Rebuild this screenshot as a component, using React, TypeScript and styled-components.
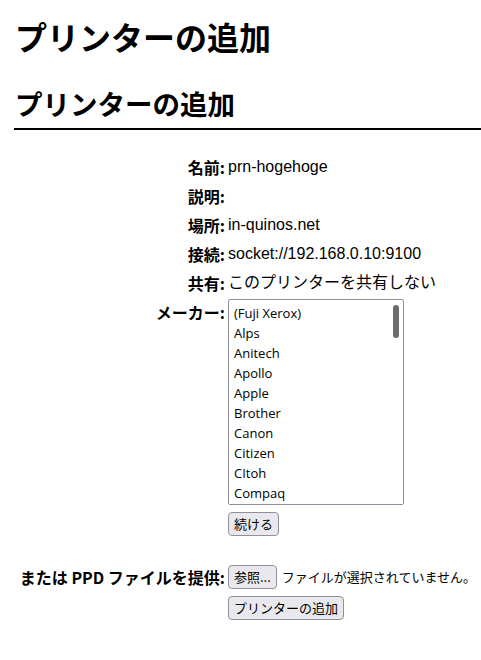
import { Fragment } from 'react'
import styled, { createGlobalStyle } from 'styled-components'

const GlobalStyle = createGlobalStyle`
  html, body {
    margin: 0;
    padding: 0;
    background: #fff;
  }
  body {
    font-family: "Liberation Sans", "Noto Sans CJK JP", sans-serif;
    color: #000;
  }
`

const Page = styled.div`
  padding: 0 0 40px 14px;
`

const Title = styled.h1`
  margin: 0;
  padding: 14px 0 0 1px;
  font-family: "Noto Sans CJK JP", sans-serif;
  font-size: 32px;
  font-weight: 700;
  line-height: 44px;
`

const Heading = styled.h2`
  margin: 26px 0 0;
  padding: 0 0 6px 1px;
  font-family: "Noto Sans CJK JP", sans-serif;
  font-size: 27.5px;
  font-weight: 700;
  line-height: 38px;
  border-bottom: 2px solid #000;
`

const FormGrid = styled.div`
  display: grid;
  grid-template-columns: 211px auto;
  column-gap: 3px;
  margin-top: 22px;
`

const Label = styled.div`
  text-align: right;
  font-family: "Noto Sans CJK JP", sans-serif;
  font-weight: 700;
  font-size: 16px;
  line-height: 27px;
  padding-top: 2px;
  white-space: nowrap;
`

const Value = styled.div`
  font-size: 16px;
  line-height: 29px;
  white-space: nowrap;
`

const Cell = styled.div<{ $pt?: number; $pb?: number }>`
  padding-top: ${p => p.$pt ?? 0}px;
  padding-bottom: ${p => p.$pb ?? 0}px;
  display: flex;
  align-items: center;
  gap: 5px;
`

const ListBox = styled.div`
  position: relative;
  box-sizing: border-box;
  width: 176px;
  height: 206px;
  padding-top: 3px;
  border: 1px solid #8f8f9d;
  border-radius: 2px;
  overflow: hidden;
  margin-top: 2px;
`

const Option = styled.div`
  font-family: "Open Sans", "Noto Sans", sans-serif;
  font-size: 13px;
  line-height: 20px;
  padding-left: 5px;
`

const Thumb = styled.div`
  position: absolute;
  top: 5px;
  right: 4px;
  width: 6px;
  height: 33px;
  border-radius: 3px;
  background: #6d6d6d;
`

const Button = styled.button`
  font-family: "Noto Sans CJK JP", sans-serif;
  font-size: 13px;
  line-height: 20px;
  height: 24px;
  padding: 0 5px;
  color: #000;
  background: #e9e9ed;
  border: 1px solid #8f8f9d;
  border-radius: 4px;
`

const Note = styled.span`
  font-family: "Noto Sans CJK JP", sans-serif;
  font-size: 13px;
`

const makers = ['(Fuji Xerox)', 'Alps', 'Anitech', 'Apollo', 'Apple', 'Brother', 'Canon', 'Citizen', 'CItoh', 'Compaq']

const rows = [
  ['名前:', 'prn-hogehoge'],
  ['説明:', ''],
  ['場所:', 'in-quinos.net'],
  ['接続:', 'socket://192.168.0.10:9100'],
  ['共有:', 'このプリンターを共有しない'],
]

export default function App() {
  return (
    <Page>
      <GlobalStyle />
      <Title>プリンターの追加</Title>
      <Heading>プリンターの追加</Heading>
      <FormGrid>
        {rows.map(([l, v]) => (
          <Fragment key={l}>
            <Label>{l}</Label>
            <Value>{v}</Value>
          </Fragment>
        ))}
        <Label>メーカー:</Label>
        <Cell>
          <ListBox role="listbox">
            {makers.map(m => (
              <Option key={m}>{m}</Option>
            ))}
            <Thumb />
          </ListBox>
        </Cell>
        <div />
        <Cell $pt={7} $pb={26}>
          <Button>続ける</Button>
        </Cell>
        <Label>または PPD ファイルを提供:</Label>
        <Cell>
          <Button>参照...</Button>
          <Note>ファイルが選択されていません。</Note>
        </Cell>
        <div />
        <Cell $pt={5}>
          <Button>プリンターの追加</Button>
        </Cell>
      </FormGrid>
    </Page>
  )
}
